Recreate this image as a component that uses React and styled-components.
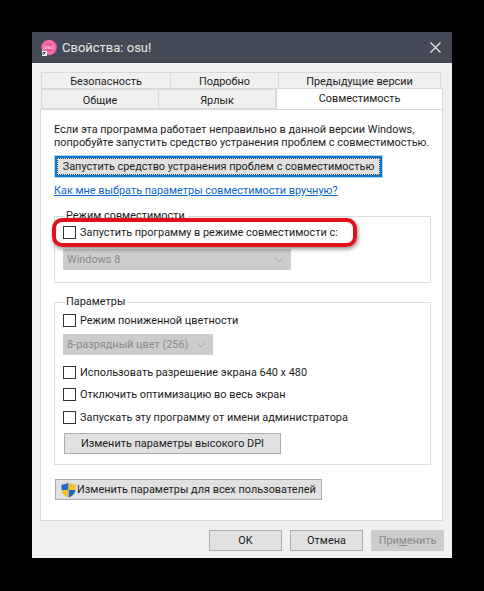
import React from 'react';
import styled, { createGlobalStyle } from 'styled-components';

const GlobalStyle = createGlobalStyle`
    html, body {
        margin: 0;
        height: 100%;
        background: #000;
    }
    body {
        font-family: Roboto, "Noto Sans", sans-serif;
        font-size: 10.9px;
        color: #1c1c1c;
    }
`;

const Page = styled.div`
    width: 484px;
    height: 591px;
    padding: 32px 32px 0;
    box-sizing: border-box;
    overflow: hidden;
`;

const Dialog = styled.div`
    position: relative;
    width: 420px;
    height: 526px;
    background: #f0f0f0;
    display: flex;
    flex-direction: column;
`;

const TitleBar = styled.div`
    height: 31px;
    flex: none;
    background: #444a55;
    display: flex;
    align-items: center;
    padding: 0 11px 0 9px;
    color: #e6e8ea;
    font-size: 13px;
`;

const Title = styled.span`
    margin-left: 5px;
    flex: 1;
`;

const TabArea = styled.div`
    height: 37px;
    flex: none;
    margin: 9px 9px 0 8px;
    position: relative;
    z-index: 1;
`;

const TabRow = styled.div`
    display: flex;
    height: ${p => p.$height}px;
    margin-left: 1px;
`;

const Tab = styled.div`
    width: ${p => p.$width}px;
    box-sizing: border-box;
    background: ${p => (p.$active ? '#fff' : '#f0f0f0')};
    border: 1px solid #d9d9d9;
    border-bottom: ${p => (p.$active ? 'none' : '1px solid #d9d9d9')};
    border-left-width: ${p => (p.$first || p.$active ? 1 : 0)}px;
    display: flex;
    justify-content: center;
    align-items: center;
    padding-top: 2px;
    ${p => p.$active && 'height: 21px; margin-top: -1px; padding-top: 0; padding-bottom: 2px;'}
`;

const Panel = styled.div`
    height: 412px;
    flex: none;
    box-sizing: border-box;
    margin: 0 9px 0 8px;
    background: #fff;
    border: 1px solid #d9d9d9;
    padding: 13px 11px 0 13px;
    display: flex;
    flex-direction: column;
    align-items: flex-start;
`;

const Intro = styled.div`
    line-height: 13px;
    white-space: nowrap;
`;

const Button = styled.div`
    box-sizing: border-box;
    width: ${p => p.$width}px;
    height: ${p => p.$height || 21}px;
    background: ${p => (p.$disabled ? '#cccccc' : '#e1e1e1')};
    color: ${p => (p.$disabled ? '#8a8a8a' : '#1c1c1c')};
    border: 1px solid ${p => (p.$disabled ? '#cccccc' : '#adadad')};
    display: flex;
    align-items: center;
    justify-content: center;
    white-space: nowrap;
`;

const FocusButton = styled(Button)`
    margin: 7px 0 0 1px;
    border: 2px solid #0a78d2;
    box-shadow: 0 0 0 1px #a9d8f7;
    outline: 1px dotted #444;
    outline-offset: -3px;
`;

const HelpLink = styled.a`
    margin-top: 6px;
    color: #0a66c8;
    text-decoration: underline;
    line-height: 16px;
`;

const Group = styled.fieldset`
    width: 377px;
    height: ${p => p.$height}px;
    box-sizing: border-box;
    margin: ${p => p.$top}px 0 0;
    padding: 0 0 0 8px;
    border: 1px solid #dcdcdc;
    display: flex;
    flex-direction: column;
    align-items: flex-start;
    legend {
        margin-left: 2px;
        padding: 0 3px 0 1px;
        line-height: 14px;
    }
`;

const CheckRow = styled.label`
    display: flex;
    align-items: center;
    height: 13px;
    margin-top: ${p => p.$top}px;
    gap: 4px;
    white-space: nowrap;
`;

const Box = styled.span`
    width: 13px;
    height: 13px;
    box-sizing: border-box;
    border: 1px solid #333;
    background: #fff;
    flex: none;
`;

const Select = styled.div`
    box-sizing: border-box;
    width: ${p => p.$width}px;
    height: 21px;
    margin-top: ${p => p.$top}px;
    background: #cccccc;
    color: #8a8a8a;
    display: flex;
    align-items: center;
    justify-content: space-between;
    padding: 0 7px 0 4px;
    white-space: nowrap;
`;

const GroupButton = styled(Button)`
    margin: ${p => p.$top}px 0 0 1px;
`;

const AllUsersButton = styled(Button)`
    margin: 14px 0 0 1px;
    justify-content: flex-start;
    padding-left: 5px;
    gap: 1px;
    svg {
        flex: none;
    }
`;

const Footer = styled.div`
    display: flex;
    justify-content: flex-end;
    gap: 8px;
    padding: 9px 8px 0 0;
`;

const Highlight = styled.div`
    position: absolute;
    left: 20px;
    top: 186px;
    width: 305px;
    height: 29px;
    box-sizing: border-box;
    border: 4px solid #e2101c;
    border-radius: 10px;
    box-shadow: 1px 2px 4px rgba(0, 0, 0, 0.45);
`;

const Underlined = styled.span`
    text-decoration: underline;
`;

const Chevron = () => (
    <svg width="10" height="6" viewBox="0 0 10 6" fill="none" stroke="#a8a8a8" strokeWidth="1">
        <path d="M0.5 0.5 L5 5 L9.5 0.5" />
    </svg>
);

const CloseIcon = () => (
    <svg width="11" height="11" viewBox="0 0 11 11" stroke="#e8eaec" strokeWidth="1.2">
        <path d="M0.5 0.5 L10.5 10.5 M10.5 0.5 L0.5 10.5" />
    </svg>
);

const AppIcon = () => (
    <svg width="16" height="17" viewBox="0 0 16 17">
        <circle cx="8" cy="8.5" r="7.8" fill="#f0609e" />
        <circle cx="8" cy="8.5" r="5.6" fill="#ee5a98" stroke="#f7b3cf" strokeWidth="0.6" />
        <text x="8" y="10" fontSize="4.6" fill="#fff" textAnchor="middle" fontFamily="Noto Sans">osu!</text>
        <rect x="1" y="12" width="5" height="5" fill="#fff" />
        <path d="M2 16 V13.5 H4.5 M2.5 15.5 L4.5 13.5" stroke="#30364a" strokeWidth="0.9" fill="none" />
    </svg>
);

const ShieldIcon = () => (
    <svg width="15" height="16" viewBox="0 0 15 16">
        <path d="M0.5 2.6 C3 2.6 5.5 2 7.5 0.5 V8 H0.5 Z" fill="#2467c4" />
        <path d="M7.5 0.5 C9.5 2 12 2.6 14.5 2.6 V8 H7.5 Z" fill="#f2c230" />
        <path d="M7.5 8 H14.5 C14.3 11.5 11.5 14.3 7.5 15.6 Z" fill="#2467c4" />
        <path d="M0.5 8 H7.5 V15.6 C3.5 14.3 0.7 11.5 0.5 8 Z" fill="#f2c230" />
    </svg>
);

const App = () => {
    return (
        <Page>
            <GlobalStyle />
            <Dialog>
                <TitleBar>
                    <AppIcon />
                    <Title>Свойства: osu!</Title>
                    <CloseIcon />
                </TitleBar>
                <TabArea>
                    <TabRow $height={17}>
                        <Tab $first $width={130}>Безопасность</Tab>
                        <Tab $width={108}>Подробно</Tab>
                        <Tab $width={162}>Предыдущие версии</Tab>
                    </TabRow>
                    <TabRow $height={20}>
                        <Tab $first $width={118}>Общие</Tab>
                        <Tab $width={117}>Ярлык</Tab>
                        <Tab $active $width={167}>Совместимость</Tab>
                    </TabRow>
                </TabArea>
                <Panel>
                    <Intro>
                        Если эта программа работает неправильно в данной версии Windows,
                        <br />
                        попробуйте запустить средство устранения проблем с совместимостью.
                    </Intro>
                    <FocusButton $width={327}>Запустить средство устранения проблем с совместимостью</FocusButton>
                    <HelpLink>Как мне выбрать параметры совместимости вручную?</HelpLink>
                    <Group $top={10} $height={74}>
                        <legend>Режим совместимости</legend>
                        <CheckRow $top={3}>
                            <Box />
                            Запустить программу в режиме совместимости с:
                        </CheckRow>
                        <Select $top={10} $width={228}>
                            Windows 8
                            <Chevron />
                        </Select>
                    </Group>
                    <Group $top={12} $height={170}>
                        <legend>Параметры</legend>
                        <CheckRow $top={5}>
                            <Box />
                            Режим пониженной цветности
                        </CheckRow>
                        <Select $top={7} $width={150}>
                            8-разрядный цвет (256)
                            <Chevron />
                        </Select>
                        <CheckRow $top={11}>
                            <Box />
                            Использовать разрешение экрана 640 x 480
                        </CheckRow>
                        <CheckRow $top={9}>
                            <Box />
                            Отключить оптимизацию во весь экран
                        </CheckRow>
                        <CheckRow $top={10}>
                            <Box />
                            Запускать эту программу от имени администратора
                        </CheckRow>
                        <GroupButton $top={9} $width={217}>Изменить параметры высокого DPI</GroupButton>
                    </Group>
                    <AllUsersButton $width={267}>
                        <ShieldIcon />
                        Изменить параметры для всех пользователей
                    </AllUsersButton>
                </Panel>
                <Footer>
                    <Button $width={73}>OK</Button>
                    <Button $width={73}>Отмена</Button>
                    <Button $width={73} $disabled>
                        <span>При<Underlined>м</Underlined>енить</span>
                    </Button>
                </Footer>
                <Highlight />
            </Dialog>
        </Page>
    );
};

export default App;
